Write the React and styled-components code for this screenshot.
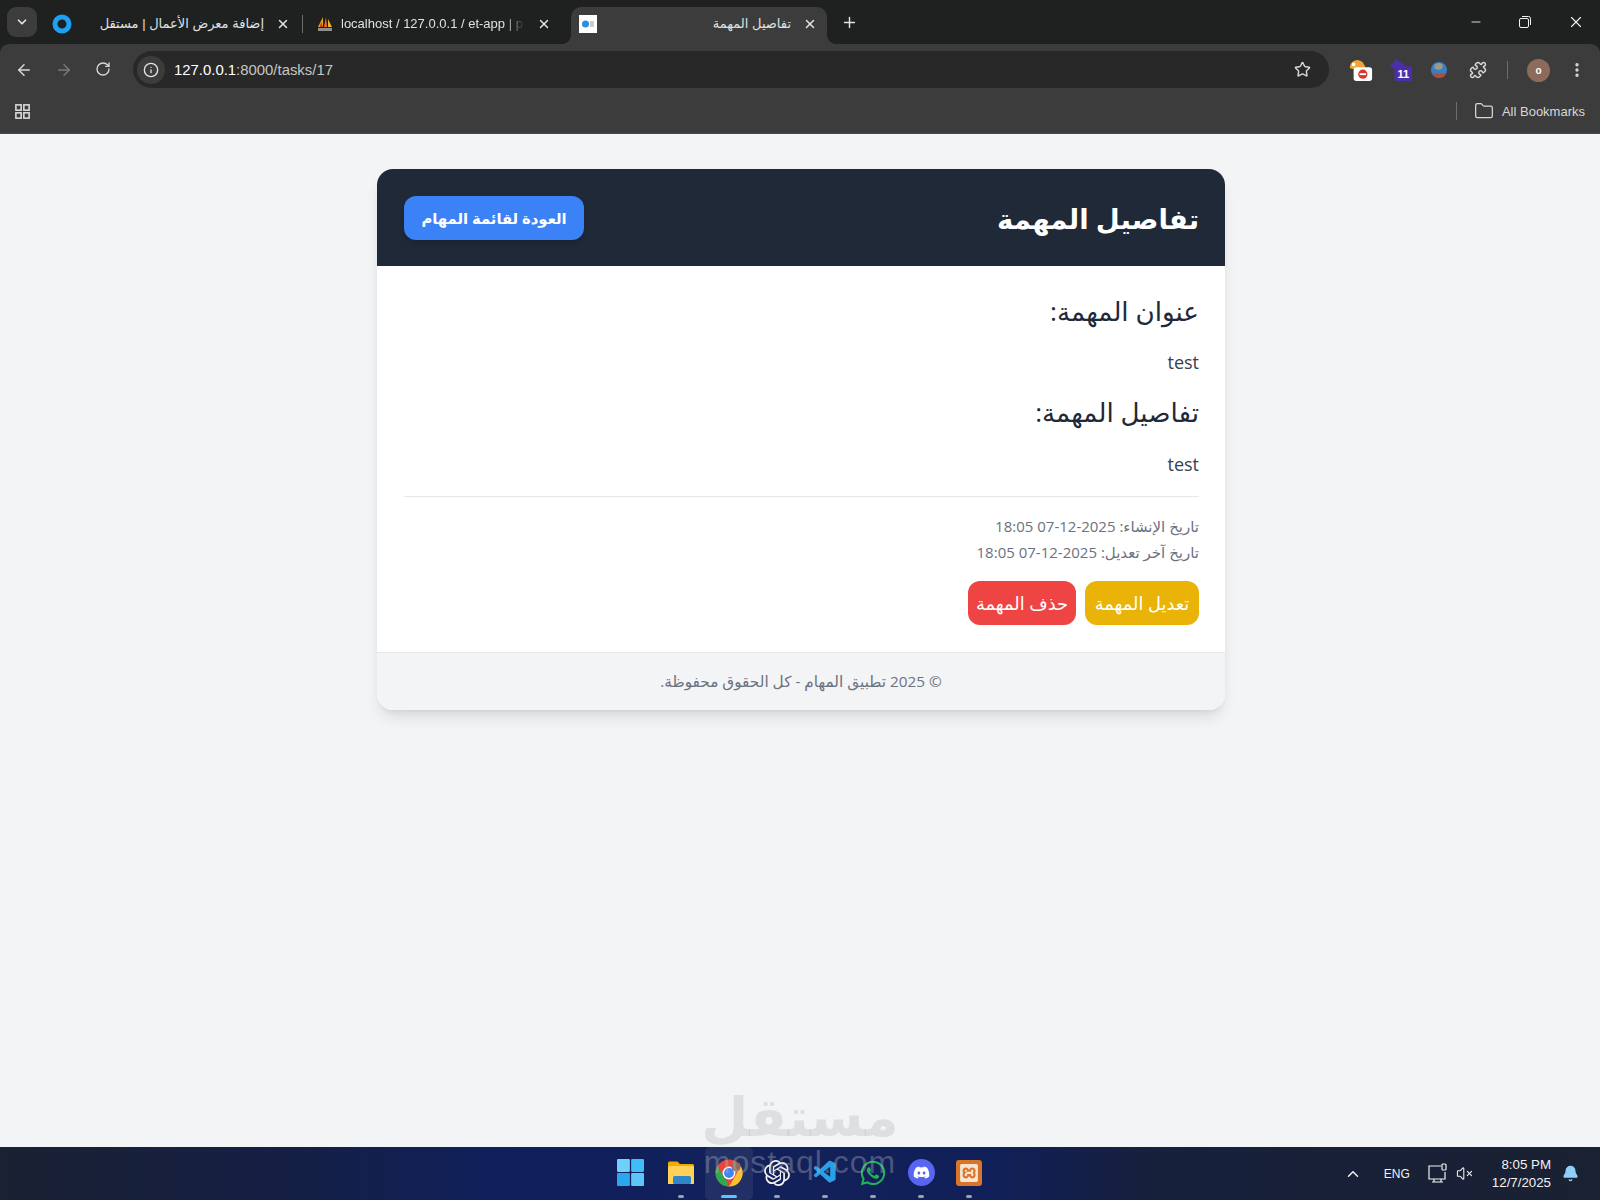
import React from "react";
import styled, { createGlobalStyle } from "styled-components";
import {
  ArrowLeft,
  ArrowRight,
  RotateCw,
  Info,
  Star,
  X,
  Plus,
  ChevronDown,
  ChevronUp,
  Minus,
  EllipsisVertical,
  Puzzle,
  Folder,
  VolumeX,
  Bell,
} from "lucide-react";
import { FaWhatsapp, FaDiscord } from "react-icons/fa";
import { SiOpenai, SiXampp } from "react-icons/si";
import { VscVscode } from "react-icons/vsc";

const GlobalStyle = createGlobalStyle`
  html, body { margin: 0; padding: 0; }
  body {
    font-family: "Open Sans", "Noto Sans", "DejaVu Sans", sans-serif;
    background: #f3f4f6;
  }
  * { box-sizing: border-box; }
`;

const Screen = styled.div`
  position: relative;
  width: 1600px;
  height: 1200px;
  display: flex;
  flex-direction: column;
  overflow: hidden;
  background: #f3f4f6;
`;

/* browser chrome */
const BrowserFrame = styled.div`
  flex: none;
  background: #1f2020;
`;

const TabStrip = styled.div`
  height: 44px;
  display: flex;
  align-items: flex-end;
  padding-left: 7px;
  color: #e3e3e3;
`;

const TabMenu = styled.div`
  width: 30px;
  height: 30px;
  align-self: flex-start;
  margin-top: 7px;
  margin-right: 7px;
  border-radius: 9px;
  background: #3c3c3c;
  display: flex;
  align-items: center;
  justify-content: center;
`;

const Tab = styled.div`
  position: relative;
  width: ${(p) => p.$width}px;
  height: 37px;
  flex: none;
  display: flex;
  align-items: center;
  padding: 0 ${(p) => p.$endPad || 10}px 4px 8px;
  gap: 8px;
  border-radius: 10px 10px 0 0;
  background: ${(p) => (p.$active ? "#3c3c3c" : "transparent")};
  margin-left: ${(p) => p.$gap || 0}px;
  ${(p) =>
    p.$active &&
    `
    &::before, &::after {
      content: "";
      position: absolute;
      bottom: 0;
      width: 10px;
      height: 10px;
    }
    &::before { left: -10px; background: radial-gradient(circle at 0 0, transparent 10px, #3c3c3c 10.5px); }
    &::after { right: -10px; background: radial-gradient(circle at 100% 0, transparent 10px, #3c3c3c 10.5px); }
  `}
`;

const TabTitle = styled.div`
  flex: 1;
  min-width: 0;
  font-size: 13px;
  line-height: 18px;
  white-space: nowrap;
  overflow: hidden;
  text-align: ${(p) => p.$align || "right"};
  color: #dfe1e2;
  margin-right: 4px;
  font-family: "Liberation Sans", "DejaVu Sans", sans-serif;
  ${(p) =>
    p.$fade &&
    `
    mask-image: linear-gradient(90deg, #000 88%, transparent 100%);
  `}
`;

const TabDivider = styled.div`
  width: 1px;
  height: 18px;
  flex: none;
  margin: 0 0 11px 0;
  background: #6b6d70;
`;

const NewTab = styled.div`
  margin: 0 0 13px 14px;
  display: flex;
`;

const WindowControls = styled.div`
  margin-left: auto;
  align-self: flex-start;
  height: 44px;
  display: flex;
  align-items: center;
  gap: 36px;
  padding-right: 15px;
  color: #f2f2f2;
`;

const Toolbar = styled.div`
  height: 52px;
  background: #3c3c3c;
  border-radius: 9px 9px 0 0;
  display: flex;
  align-items: center;
  padding: 0 11px 0 15px;
  color: #d6d8da;
`;

const NavButtons = styled.div`
  display: flex;
  gap: 22px;
  margin-right: 22px;
`;

const AddressBar = styled.div`
  width: 1196px;
  height: 37px;
  flex: none;
  margin-top: -1px;
  background: #282828;
  border-radius: 19px;
  display: flex;
  align-items: center;
  padding: 0 18px 0 4px;
`;

const InfoBadge = styled.div`
  width: 28px;
  height: 28px;
  border-radius: 50%;
  background: #3c3c3c;
  display: flex;
  align-items: center;
  justify-content: center;
  margin-right: 9px;
`;

const Url = styled.div`
  flex: 1;
  font-family: "Liberation Sans", sans-serif;
  font-size: 14.9px;
  color: #c4c7c5;
  span {
    color: #fff;
  }
`;

const Extensions = styled.div`
  margin-left: 20px;
  flex: 1;
  display: flex;
  align-items: center;
  gap: 15px;
`;

const ExtSlot = styled.div`
  width: 24px;
  height: 24px;
  display: flex;
  align-items: center;
  justify-content: center;
  margin-left: ${(p) => (p.$pushed ? "auto" : "0")};
`;

const ToolbarDivider = styled.div`
  width: 1px;
  height: 18px;
  background: #6b6d70;
  margin: 0 2px;
`;

const Avatar = styled.div`
  width: 23px;
  height: 23px;
  margin-left: 2px;
  border-radius: 50%;
  background: #8c6b5d;
  color: #fff;
  font-family: "Liberation Sans", sans-serif;
  font-size: 10px;
  font-weight: 700;
  display: flex;
  align-items: center;
  justify-content: center;
`;

const BookmarksBar = styled.div`
  height: 38px;
  background: #3c3c3c;
  border-bottom: 1px solid #4a4a4a;
  display: flex;
  align-items: center;
  padding: 0 15px 7px 15px;
  color: #d6d8da;
`;

const BookmarksDivider = styled.div`
  width: 1px;
  height: 18px;
  background: #6b6d70;
  margin-right: 9px;
`;

const BookmarksRight = styled.div`
  margin-left: auto;
  display: flex;
  align-items: center;
  gap: 8px;
  font-family: "Liberation Sans", sans-serif;
  font-size: 13px;
`;

/* page content */
const Main = styled.main`
  flex: 1;
  padding: 35px 0 0 2px;
`;

const Card = styled.div`
  width: 848px;
  margin: 0 auto;
  background: #fff;
  border-radius: 16px;
  overflow: hidden;
  box-shadow: 0 10px 15px -3px rgba(0, 0, 0, 0.1),
    0 4px 6px -4px rgba(0, 0, 0, 0.1);
`;

const CardHeader = styled.header`
  height: 97px;
  background: #1f2937;
  padding: 0 26px 0 27px;
  display: flex;
  align-items: center;
  justify-content: space-between;
`;

const Title = styled.h1`
  margin: 0;
  color: #fff;
  font-size: 27.6px;
  line-height: 40px;
  font-weight: 700;
`;

const BackLink = styled.a`
  width: 180px;
  height: 44px;
  border-radius: 12px;
  background: #3b82f6;
  color: #fff;
  font-size: 14.8px;
  font-weight: 700;
  display: flex;
  align-items: center;
  justify-content: center;
  box-shadow: 0 4px 6px -1px rgba(0, 0, 0, 0.1),
    0 2px 4px -2px rgba(0, 0, 0, 0.1);
`;

const CardBody = styled.section`
  padding: 27px 26px 27px 27px;
`;

const SectionTitle = styled.h2`
  margin: 0 0 ${(p) => p.$after}px;
  color: #1f2937;
  font-size: 26.2px;
  line-height: 36px;
  font-weight: 500;
`;

const SectionText = styled.p`
  margin: 0 0 18px;
  color: #374151;
  font-size: 18px;
  line-height: 28px;
`;

const Meta = styled.div`
  margin-top: 17px;
  border-top: 1px solid #e5e7eb;
  padding-top: 16px;
  color: #6b7280;
  font-size: 15px;
  line-height: 26px;
`;

const Actions = styled.div`
  margin-top: 16px;
  display: flex;
  gap: 9px;
`;

const ActionButton = styled.a`
  width: ${(p) => p.$width}px;
  height: 44px;
  border-radius: 12px;
  background: ${(p) => p.$bg};
  color: #fff;
  font-size: 17.8px;
  display: flex;
  align-items: center;
  justify-content: center;
`;

const CardFooter = styled.footer`
  height: 58px;
  background: #f3f4f6;
  border-top: 1px solid #e5e7eb;
  color: #6b7280;
  font-size: 15.3px;
  padding-bottom: 1px;
  display: flex;
  align-items: center;
  justify-content: center;
`;

/* windows taskbar */
const Taskbar = styled.div`
  position: relative;
  height: 53px;
  flex: none;
  background: linear-gradient(
    90deg,
    #1a2132 0%,
    #151f45 18%,
    #0f1f5c 32%,
    #12215a 50%,
    #101f58 62%,
    #17203c 72%,
    #1a2132 100%
  );
  display: flex;
  align-items: center;
`;

const TaskIcons = styled.div`
  position: absolute;
  left: 609px;
  top: 0;
  display: flex;
`;

const TaskIcon = styled.div`
  position: relative;
  width: 48px;
  height: 53px;
  display: flex;
  align-items: center;
  justify-content: center;
  padding-bottom: 2px;
  border-radius: 5px;
  color: ${(p) => p.$color || "#fff"};
  background: ${(p) => (p.$active ? "rgba(255,255,255,0.07)" : "transparent")};
  &::after {
    content: "";
    display: ${(p) => (p.$dot ? "block" : "none")};
    position: absolute;
    bottom: 2px;
    left: 50%;
    transform: translateX(-50%);
    width: ${(p) => (p.$active ? 16 : 6)}px;
    height: 3px;
    border-radius: 2px;
    background: ${(p) => (p.$active ? "#5fc4f5" : "#9aa0ac")};
  }
`;

const StartIcon = styled(TaskIcon)`
  padding-right: 5px;
`;

const OverlayGlyph = styled.div`
  position: absolute;
  inset: 0 0 2px 0;
  display: flex;
  align-items: center;
  justify-content: center;
`;

const Tray = styled.div`
  margin-left: auto;
  display: flex;
  align-items: center;
  color: #f2f2f2;
  padding-right: 21px;
`;

const TrayLang = styled.div`
  font-family: "Liberation Sans", sans-serif;
  font-size: 12px;
  margin: 0 17px 0 22px;
`;

const TraySpeaker = styled.div`
  display: flex;
  margin-left: 7px;
`;

const Clock = styled.div`
  margin-left: 19px;
  font-family: "Liberation Sans", sans-serif;
  font-size: 13.3px;
  line-height: 18px;
  text-align: right;
`;

const TrayBell = styled.div`
  display: flex;
  margin-left: 11px;
`;

/* watermark over the page */
const Watermark = styled.div`
  position: absolute;
  left: 690px;
  top: 1080px;
  width: 220px;
  text-align: center;
  pointer-events: none;
  font-weight: 700;
`;

const WatermarkArabic = styled.div`
  font-size: 54px;
  line-height: 70px;
  color: rgba(150, 150, 150, 0.22);
`;

const WatermarkLatin = styled.div`
  font-family: "Liberation Sans", sans-serif;
  font-size: 32px;
  line-height: 24px;
  font-weight: 400;
  letter-spacing: 1px;
  color: rgba(190, 190, 190, 0.35);
`;

const ChromeLogo = () => (
  <svg width="28" height="28" viewBox="0 0 48 48">
    <circle cx="24" cy="24" r="23" fill="#e8453c" />
    <path d="M24 47A23 23 0 0 1 4 12.500L16 31l8 16z" fill="#2fa84f" />
    <path d="M24 47l12-20 8-15A23 23 0 0 1 24 47z" fill="#fbc02d" />
    <circle cx="24" cy="24" r="11" fill="#fff" />
    <circle cx="24" cy="24" r="8.500" fill="#3f86f4" />
    <circle cx="36" cy="13" r="8" fill="#8c6b5d" />
  </svg>
);

const WindowsLogo = () => (
  <svg width="27" height="27" viewBox="0 0 26 26">
    <rect x="0" y="0" width="12.400" height="12.400" rx="1" fill="#6fd0fa" />
    <rect x="13.600" y="0" width="12.400" height="12.400" rx="1" fill="#3fbdf8" />
    <rect x="0" y="13.600" width="12.400" height="12.400" rx="1" fill="#2aa8ee" />
    <rect x="13.600" y="13.600" width="12.400" height="12.400" rx="1" fill="#5cc6f6" />
  </svg>
);

const FolderLogo = () => (
  <svg width="28" height="26" viewBox="0 0 28 26">
    <path d="M1 3a1.500 1.500 0 0 1 1.500-1.500h8L13 4h12.500A1.500 1.500 0 0 1 27 5.500V24H1z" fill="#f2a900" />
    <rect x="1" y="6" width="26" height="18" rx="1.500" fill="#ffd257" />
    <rect x="6" y="16" width="18" height="8" rx="1.500" fill="#2f86c9" />
  </svg>
);

const PmaIcon = () => (
  <svg width="16" height="16" viewBox="0 0 16 16">
    <path d="M6 1L1 11h5z" fill="#f0a020" />
    <path d="M9 1l-2 10h3z" fill="#e8731a" />
    <path d="M11 3l0 8h4z" fill="#f0b030" />
    <path d="M4 6L3 11h3z" fill="#c23a1e" />
    <rect x="1" y="12" width="14" height="3" fill="#8f8f8f" />
  </svg>
);

const TaskFavicon = () => (
  <svg width="18" height="18" viewBox="0 0 18 18">
    <rect width="18" height="18" fill="#fff" />
    <circle cx="6.500" cy="9" r="3.500" fill="#2d8fd8" />
    <rect x="11" y="6" width="4" height="6" fill="#c9ced4" />
  </svg>
);

const BlockerIcon = () => (
  <svg width="26" height="26" viewBox="0 0 26 26">
    <path d="M1 11a8 8 0 0 1 14-6l3 5-9 3z" fill="#f0a53a" />
    <circle cx="5" cy="7" r="2" fill="#fff" />
    <rect x="5" y="10" width="20" height="15" rx="3" fill="#fff" />
    <circle cx="15" cy="17.500" r="5" fill="#d9372c" />
    <rect x="11.500" y="16.500" width="7" height="2" fill="#fff" />
  </svg>
);

const BadgeIcon = () => (
  <svg width="26" height="26" viewBox="0 0 26 26">
    <path d="M9 1l9 6-6 7-10-5z" fill="#4b2fa8" />
    <rect x="7" y="9" width="19" height="16" rx="2" fill="#4b2fa8" />
    <text x="16.500" y="22" textAnchor="middle" fontSize="12" fontWeight="700" fill="#fff" fontFamily="Liberation Sans">
      11
    </text>
  </svg>
);

const GlobeIcon = () => (
  <svg width="18" height="18" viewBox="0 0 18 18">
    <circle cx="9" cy="9" r="8" fill="#3a7fc1" />
    <path d="M5 3c3-1 6-1 8 1l-1 4-4 1-4-2z" fill="#9a9a8c" />
    <path d="M2 12c4 1 9 1 14 0l-2 4H5z" fill="#a8503a" />
  </svg>
);

const NetworkIcon = () => (
  <svg width="22" height="22" viewBox="0 0 22 22" fill="none" stroke="#f2f2f2" strokeWidth="1.200">
    <path d="M14 3H2v13h16V9" />
    <path d="M7 16v3h7v-3M5 19h11" />
    <rect x="15" y="1" width="4" height="6" rx="1" />
  </svg>
);

const AppsIcon = () => (
  <svg width="15" height="15" viewBox="0 0 17 17" fill="none" stroke="#d6d8da" strokeWidth="1.800">
    <rect x="1" y="1" width="6" height="6" />
    <rect x="10" y="1" width="6" height="6" />
    <rect x="1" y="10" width="6" height="6" />
    <rect x="10" y="10" width="6" height="6" />
  </svg>
);

const RestoreIcon = () => (
  <svg width="12" height="12" viewBox="0 0 12 12" fill="none" stroke="#f2f2f2" strokeWidth="1">
    <rect x="0.500" y="2.500" width="9" height="9" rx="1.500" />
    <path d="M3 0.500h6.500a2 2 0 0 1 2 2V9" />
  </svg>
);

const App = () => {
  return (
    <Screen>
      <GlobalStyle />
      <BrowserFrame>
        <TabStrip>
          <TabMenu>
            <ChevronDown size={14} strokeWidth={3} />
          </TabMenu>
          <Tab $width={258} $endPad={12}>
            <svg width="20" height="20" viewBox="0 0 20 20">
              <circle cx="10" cy="10" r="7" fill="none" stroke="#1da1f2" strokeWidth="5" />
            </svg>
            <TabTitle dir="rtl">إضافة معرض الأعمال | مستقل</TabTitle>
            <X size={14} strokeWidth={2.500} />
          </Tab>
          <TabDivider />
          <Tab $width={262} $gap={6} $endPad={20}>
            <PmaIcon />
            <TabTitle $align="left" $fade>
              localhost / 127.0.0.1 / et-app | p
            </TabTitle>
            <X size={14} strokeWidth={2.500} />
          </Tab>
          <Tab $width={256} $active>
            <TaskFavicon />
            <TabTitle dir="rtl">تفاصيل المهمة</TabTitle>
            <X size={14} strokeWidth={2.500} />
          </Tab>
          <NewTab>
            <Plus size={17} strokeWidth={2} />
          </NewTab>
          <WindowControls>
            <Minus size={14} strokeWidth={1.500} />
            <RestoreIcon />
            <X size={18} strokeWidth={1.500} />
          </WindowControls>
        </TabStrip>

        <Toolbar>
          <NavButtons>
            <ArrowLeft size={18} strokeWidth={2} />
            <ArrowRight size={18} strokeWidth={2} color="#77797b" />
            <RotateCw size={16} strokeWidth={2} />
          </NavButtons>
          <AddressBar>
            <InfoBadge>
              <Info size={16} strokeWidth={2} color="#e3e3e3" />
            </InfoBadge>
            <Url>
              <span>127.0.0.1</span>:8000/tasks/17
            </Url>
            <Star size={17} strokeWidth={2} color="#d6d8da" />
          </AddressBar>
          <Extensions>
            <ExtSlot>
              <BlockerIcon />
            </ExtSlot>
            <ExtSlot>
              <BadgeIcon />
            </ExtSlot>
            <ExtSlot>
              <GlobeIcon />
            </ExtSlot>
            <ExtSlot>
              <Puzzle size={18} strokeWidth={2} />
            </ExtSlot>
            <ToolbarDivider />
            <Avatar>o</Avatar>
            <ExtSlot $pushed>
              <EllipsisVertical size={18} strokeWidth={2.500} />
            </ExtSlot>
          </Extensions>
        </Toolbar>

        <BookmarksBar>
          <AppsIcon />
          <BookmarksRight>
            <BookmarksDivider />
            <Folder size={20} strokeWidth={1.500} />
            All Bookmarks
          </BookmarksRight>
        </BookmarksBar>
      </BrowserFrame>

      <Main dir="rtl">
        <Card>
          <CardHeader>
            <Title>تفاصيل المهمة</Title>
            <BackLink>العودة لقائمة المهام</BackLink>
          </CardHeader>
          <CardBody>
            <SectionTitle $after={19}>عنوان المهمة:</SectionTitle>
            <SectionText>test</SectionText>
            <SectionTitle $after={20}>تفاصيل المهمة:</SectionTitle>
            <SectionText>test</SectionText>
            <Meta>
              <div>تاريخ الإنشاء: 2025-12-07 18:05</div>
              <div>تاريخ آخر تعديل: 2025-12-07 18:05</div>
            </Meta>
            <Actions>
              <ActionButton $bg="#eab308" $width={114}>
                تعديل المهمة
              </ActionButton>
              <ActionButton $bg="#ef4444" $width={108}>
                حذف المهمة
              </ActionButton>
            </Actions>
          </CardBody>
          <CardFooter>© 2025 تطبيق المهام - كل الحقوق محفوظة.</CardFooter>
        </Card>
      </Main>

      <Taskbar>
        <TaskIcons>
          <StartIcon>
            <WindowsLogo />
          </StartIcon>
          <TaskIcon $dot>
            <FolderLogo />
          </TaskIcon>
          <TaskIcon $active $dot>
            <ChromeLogo />
          </TaskIcon>
          <TaskIcon $dot $color="#f0f0f0">
            <SiOpenai size={26} />
          </TaskIcon>
          <TaskIcon $dot $color="#2a9fe6">
            <VscVscode size={27} />
          </TaskIcon>
          <TaskIcon $dot $color="#25b05a">
            <FaWhatsapp size={28} />
          </TaskIcon>
          <TaskIcon $dot>
            <svg width="27" height="27" viewBox="0 0 27 27">
              <circle cx="13.500" cy="13.500" r="13.500" fill="#5865f2" />
            </svg>
            <OverlayGlyph>
              <FaDiscord size={17} />
            </OverlayGlyph>
          </TaskIcon>
          <TaskIcon $dot $color="#f6e5d0">
            <svg width="26" height="26" viewBox="0 0 26 26">
              <rect width="26" height="26" rx="3" fill="#d9742a" />
            </svg>
            <OverlayGlyph>
              <SiXampp size={18} />
            </OverlayGlyph>
          </TaskIcon>
        </TaskIcons>
        <Tray>
          <ChevronUp size={18} strokeWidth={2} />
          <TrayLang>ENG</TrayLang>
          <NetworkIcon />
          <TraySpeaker>
            <VolumeX size={17} strokeWidth={1.500} />
          </TraySpeaker>
          <Clock>
            <div>8:05 PM</div>
            <div>12/7/2025</div>
          </Clock>
          <TrayBell>
            <Bell size={17} fill="#8fd0fb" color="#8fd0fb" />
          </TrayBell>
        </Tray>
      </Taskbar>

      <Watermark>
        <WatermarkArabic>مستقل</WatermarkArabic>
        <WatermarkLatin>mostaql.com</WatermarkLatin>
      </Watermark>
    </Screen>
  );
};

export default App;
